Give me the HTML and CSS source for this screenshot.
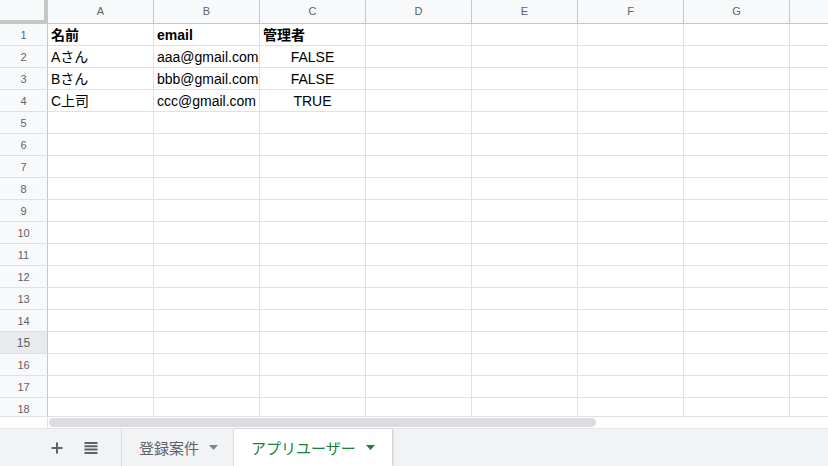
FILE: index.html
```html
<!DOCTYPE html>
<html lang="ja">
<head>
<meta charset="utf-8">
<title>Sheet</title>
<link rel="stylesheet" href="styles.css">
</head>
<body>
<div class="app">
  <div class="grid-wrap">
    <div class="grid">
      <div class="corner"></div>
      <div class="ch">A</div><div class="ch">B</div><div class="ch">C</div><div class="ch">D</div><div class="ch">E</div><div class="ch">F</div><div class="ch">G</div><div class="ch last"></div>

      <div class="rh">1</div><div class="c b">名前</div><div class="c b">email</div><div class="c b">管理者</div><div class="c"></div><div class="c"></div><div class="c"></div><div class="c"></div><div class="c last"></div>
      <div class="rh">2</div><div class="c">Aさん</div><div class="c">aaa@gmail.com</div><div class="c ctr">FALSE</div><div class="c"></div><div class="c"></div><div class="c"></div><div class="c"></div><div class="c last"></div>
      <div class="rh">3</div><div class="c">Bさん</div><div class="c">bbb@gmail.com</div><div class="c ctr">FALSE</div><div class="c"></div><div class="c"></div><div class="c"></div><div class="c"></div><div class="c last"></div>
      <div class="rh">4</div><div class="c">C上司</div><div class="c">ccc@gmail.com</div><div class="c ctr">TRUE</div><div class="c"></div><div class="c"></div><div class="c"></div><div class="c"></div><div class="c last"></div>
      <div class="rh">5</div><div class="c"></div><div class="c"></div><div class="c"></div><div class="c"></div><div class="c"></div><div class="c"></div><div class="c"></div><div class="c last"></div>
      <div class="rh">6</div><div class="c"></div><div class="c"></div><div class="c"></div><div class="c"></div><div class="c"></div><div class="c"></div><div class="c"></div><div class="c last"></div>
      <div class="rh">7</div><div class="c"></div><div class="c"></div><div class="c"></div><div class="c"></div><div class="c"></div><div class="c"></div><div class="c"></div><div class="c last"></div>
      <div class="rh">8</div><div class="c"></div><div class="c"></div><div class="c"></div><div class="c"></div><div class="c"></div><div class="c"></div><div class="c"></div><div class="c last"></div>
      <div class="rh">9</div><div class="c"></div><div class="c"></div><div class="c"></div><div class="c"></div><div class="c"></div><div class="c"></div><div class="c"></div><div class="c last"></div>
      <div class="rh">10</div><div class="c"></div><div class="c"></div><div class="c"></div><div class="c"></div><div class="c"></div><div class="c"></div><div class="c"></div><div class="c last"></div>
      <div class="rh">11</div><div class="c"></div><div class="c"></div><div class="c"></div><div class="c"></div><div class="c"></div><div class="c"></div><div class="c"></div><div class="c last"></div>
      <div class="rh">12</div><div class="c"></div><div class="c"></div><div class="c"></div><div class="c"></div><div class="c"></div><div class="c"></div><div class="c"></div><div class="c last"></div>
      <div class="rh">13</div><div class="c"></div><div class="c"></div><div class="c"></div><div class="c"></div><div class="c"></div><div class="c"></div><div class="c"></div><div class="c last"></div>
      <div class="rh">14</div><div class="c"></div><div class="c"></div><div class="c"></div><div class="c"></div><div class="c"></div><div class="c"></div><div class="c"></div><div class="c last"></div>
      <div class="rh sel">15</div><div class="c"></div><div class="c"></div><div class="c"></div><div class="c"></div><div class="c"></div><div class="c"></div><div class="c"></div><div class="c last"></div>
      <div class="rh">16</div><div class="c"></div><div class="c"></div><div class="c"></div><div class="c"></div><div class="c"></div><div class="c"></div><div class="c"></div><div class="c last"></div>
      <div class="rh">17</div><div class="c"></div><div class="c"></div><div class="c"></div><div class="c"></div><div class="c"></div><div class="c"></div><div class="c"></div><div class="c last"></div>
      <div class="rh">18</div><div class="c"></div><div class="c"></div><div class="c"></div><div class="c"></div><div class="c"></div><div class="c"></div><div class="c"></div><div class="c last"></div>
    </div>
  </div>
  <div class="hscroll">
    <div class="hs-gutter"></div>
    <div class="hs-track"><div class="thumb"></div></div>
  </div>
  <div class="tabbar">
    <div class="tools">
      <span class="tool" aria-label="add sheet">
        <svg width="12" height="12" viewBox="0 0 12 12"><path d="M6 0.5v11M0.5 6h11" stroke="#5f6368" stroke-width="2" fill="none"/></svg>
      </span>
      <span class="tool" aria-label="all sheets">
        <svg width="14" height="12" viewBox="0 0 14 12"><path d="M0.5 1h13M0.5 4.3h13M0.5 7.6h13M0.5 10.9h13" stroke="#5f6368" stroke-width="2" fill="none"/></svg>
      </span>
    </div>
    <div class="tab">
      <span class="tab-label">登録案件</span>
      <svg class="caret" width="9" height="5" viewBox="0 0 9 5"><path d="M0 0h9L4.5 5z" fill="#80868b"/></svg>
    </div>
    <div class="tab active">
      <span class="tab-label">アプリユーザー</span>
      <svg class="caret" width="9" height="5" viewBox="0 0 9 5"><path d="M0 0h9L4.5 5z" fill="#188038"/></svg>
    </div>
  </div>
</div>
</body>
</html>
```

FILE: styles.css
```css
html, body {
  margin: 0;
  padding: 0;
  width: 828px;
  height: 466px;
  overflow: hidden;
  background: #fff;
  font-family: "Liberation Sans", Arial, "Noto Sans CJK JP", sans-serif;
}

.app {
  display: flex;
  flex-direction: column;
  width: 828px;
  height: 466px;
}

.grid-wrap {
  height: 416px;
  overflow: hidden;
  flex: none;
}

.grid {
  display: grid;
  grid-template-columns: 48px repeat(7, 106px) 38px;
  grid-template-rows: 24px repeat(18, 22px);
}

.corner {
  box-sizing: border-box;
  background: #f8f9fa;
  border-right: 4px solid #c4c7c5;
  border-bottom: 4px solid #c4c7c5;
}

.ch {
  box-sizing: border-box;
  background: #f8f9fa;
  border-right: 1px solid #c4c7c5;
  border-bottom: 1px solid #c4c7c5;
  color: #5f6368;
  font-size: 11px;
  display: flex;
  align-items: center;
  justify-content: center;
  padding-bottom: 1px;
}

.rh {
  box-sizing: border-box;
  background: #f8f9fa;
  border-right: 1px solid #c4c7c5;
  border-bottom: 1px solid #e1e1e1;
  color: #5f6368;
  font-size: 11px;
  display: flex;
  align-items: center;
  justify-content: center;
}

.rh.sel {
  background: #e8eaed;
  font-size: 12px;
}

.c {
  box-sizing: border-box;
  border-right: 1px solid #e1e1e1;
  border-bottom: 1px solid #e1e1e1;
  font-size: 14px;
  color: #000;
  padding: 2px 0 0 3px;
  line-height: 19px;
  white-space: nowrap;
  overflow: hidden;
}

.c.b {
  font-weight: bold;
}

.c.ctr {
  text-align: center;
  padding-left: 0;
}

.last {
  border-right: none;
}

.hscroll {
  flex: none;
  height: 12px;
  display: flex;
  box-sizing: border-box;
  border-top: 1px solid #e1e1e1;
}

.hs-gutter {
  width: 48px;
  box-sizing: border-box;
  border-right: 1px solid #e1e1e1;
}

.hs-track {
  flex: 1;
  padding: 1px 0 0 1px;
}

.thumb {
  width: 547px;
  height: 9px;
  border-radius: 5px;
  background: #dadce0;
}

.tabbar {
  flex: 1;
  display: flex;
  background: #f1f3f4;
  border-top: 1px solid #e4e6e8;
  box-sizing: border-box;
}

.tools {
  width: 122px;
  display: flex;
  align-items: center;
  padding-left: 51px;
  gap: 21px;
  box-sizing: border-box;
  border-right: 1px solid #dadce0;
}

.tool {
  display: flex;
  align-items: center;
}

.tab {
  display: flex;
  align-items: center;
  box-sizing: border-box;
  width: 112px;
  padding-left: 17px;
  gap: 10px;
  color: #5f6368;
  font-size: 15px;
  font-family: "Noto Sans CJK JP", sans-serif;
}

.tab.active {
  width: 158px;
  background: #fff;
  color: #188038;
  box-shadow: 1px 0 2px rgba(60, 64, 67, 0.25), -1px 0 1px rgba(60, 64, 67, 0.1);
}

.tab-label {
  line-height: 20px;
}

.caret {
  display: block;
}
```
